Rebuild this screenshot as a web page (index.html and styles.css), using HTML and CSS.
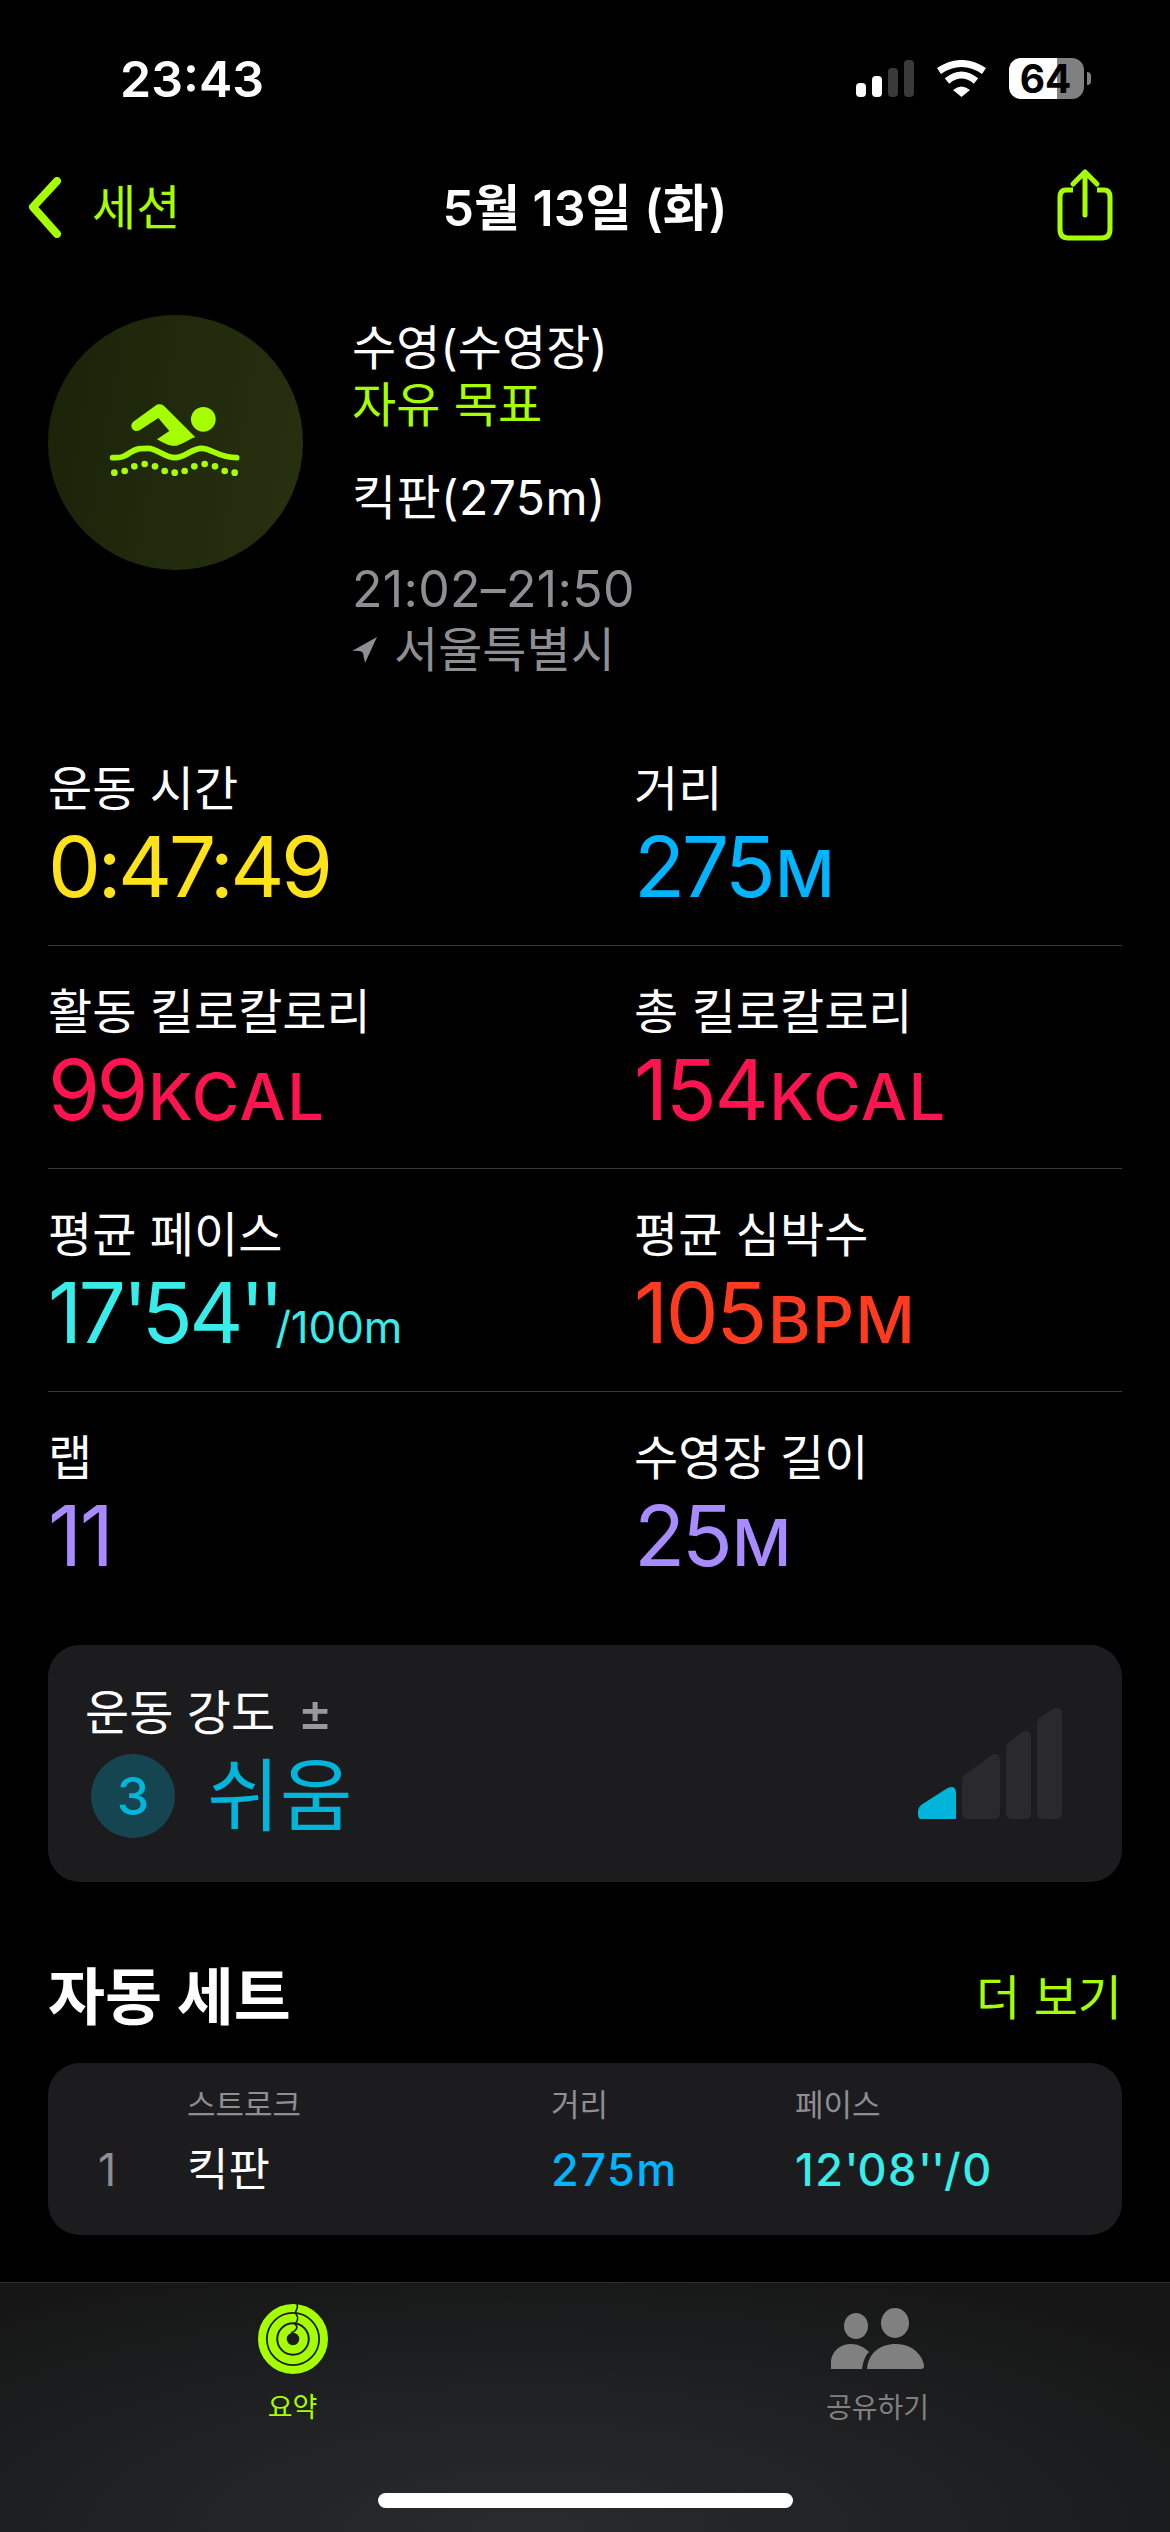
FILE: index.html
```html
<!DOCTYPE html>
<html lang="ko">
  <head>
    <meta charset="UTF-8" />
    <title>5월 13일 (화)</title>
    <link rel="stylesheet" href="styles.css">
  </head>
  <body>
    <div id="page">
      <div class="status-bar">
        <span class="clock">23:43</span>
        <div class="status-icons">
          <svg class="signal" width="58" height="37" viewBox="0 0 58 37">
            <rect x="0" y="23" width="10" height="14" rx="4" fill="#fff" />
            <rect x="16" y="16" width="10" height="21" rx="4" fill="#fff" />
            <rect x="32" y="8" width="10" height="29" rx="4" fill="#3a3a3a" />
            <rect x="48" y="0" width="10" height="37" rx="4" fill="#3a3a3a" />
          </svg>
          <svg class="wifi" width="51" height="37" viewBox="0 0 51 37">
            <path d="M3 11 Q25.5 -4 48 11" fill="none" stroke="#fff" stroke-width="7" />
            <path d="M11 21 Q25.5 9 40 21" fill="none" stroke="#fff" stroke-width="7" />
            <path d="M17 30 Q25.5 23 34 30 L25.5 37 Z" fill="#fff" />
          </svg>
          <div class="battery">
            <div class="battery-body"><span class="battery-num">64</span></div>
            <div class="battery-tip"></div>
          </div>
        </div>
      </div>

      <div class="nav-bar">
        <div class="nav-back">
          <svg width="36" height="61" viewBox="0 0 36 61">
            <path d="M30 4 L6 30 L30 57" fill="none" stroke="#a6ff00" stroke-width="8" stroke-linecap="round" stroke-linejoin="round" />
          </svg>
          <span class="nav-back-text">세션</span>
        </div>
        <div class="nav-title">5월 13일 (화)</div>
        <svg class="nav-share" width="60" height="74" viewBox="0 0 60 74">
          <path d="M20 23 H13 Q7 23 7 30 V62 Q7 71 15 71 H49 Q57 71 57 62 V30 Q57 23 51 23 H44" fill="none" stroke="#a6ff00" stroke-width="5" />
          <path d="M32 48 V6 M20 17 L32 5 L44 17" fill="none" stroke="#a6ff00" stroke-width="5" stroke-linecap="round" stroke-linejoin="round" />
        </svg>
      </div>

      <div class="hero">
        <div class="hero-circle">
          <svg width="180" height="110" viewBox="0 0 540 330">
            <circle cx="340" cy="118" r="37" fill="#a6ff00" />
            <path d="M207 73 C215 72 220 76 226 82 L316 172 C300 175 285 190 260 197 C240 200 222 190 201 178 L238 153 L205 114 L150 150 C138 158 125 150 124 138 C124 130 128 126 134 122 L195 78 C199 75 203 73 207 73 Z" fill="#a6ff00" />
            <path d="M68 233 C100 233 105 228 120 218 C140 205 150 205 175 205 C200 205 225 233 255 233 C285 233 305 205 335 205 C365 205 385 233 440 233" fill="none" stroke="#a6ff00" stroke-width="17" stroke-linecap="round" />
            <g fill="#a6ff00">
              <circle cx="73" cy="278" r="10" /><circle cx="104" cy="273" r="10" /><circle cx="133" cy="259" r="10" />
              <circle cx="164" cy="252" r="10" /><circle cx="195" cy="259" r="10" /><circle cx="224" cy="273" r="10" />
              <circle cx="254" cy="278" r="10" /><circle cx="284" cy="273" r="10" /><circle cx="313" cy="259" r="10" />
              <circle cx="344" cy="252" r="10" /><circle cx="375" cy="259" r="10" /><circle cx="404" cy="273" r="10" />
              <circle cx="434" cy="278" r="10" />
            </g>
          </svg>
        </div>
        <div class="hero-text">
          <div>수영(수영장)</div>
          <div class="green hero-goal">자유 목표</div>
          <div class="hero-gap-a">킥판(275m)</div>
          <div class="hero-gap-b hero-time gray">21:02–21:50</div>
          <div class="hero-place gray">
            <svg width="25" height="26" viewBox="0 0 25 26">
              <path d="M25 0 L0 14 Q9 13 11 16 L13 26 Z" fill="#8e8e93" />
            </svg>
            <span>서울특별시</span>
          </div>
        </div>
      </div>

      <div class="stats">
        <div class="stat-row">
          <div class="stat">
            <div class="stat-label">운동 시간</div>
            <div class="stat-value yellow">0:47:49</div>
          </div>
          <div class="stat">
            <div class="stat-label">거리</div>
            <div class="stat-value blue">275<span class="unit">M</span></div>
          </div>
        </div>
        <div class="stat-row">
          <div class="stat">
            <div class="stat-label">활동 킬로칼로리</div>
            <div class="stat-value pink">99<span class="unit">KCAL</span></div>
          </div>
          <div class="stat">
            <div class="stat-label">총 킬로칼로리</div>
            <div class="stat-value loose pink">154<span class="unit">KCAL</span></div>
          </div>
        </div>
        <div class="stat-row">
          <div class="stat">
            <div class="stat-label">평균 페이스</div>
            <div class="stat-value cyan">17<span class="ticks">'</span>54<span class="ticks">''</span><span class="unit-small">/100m</span></div>
          </div>
          <div class="stat">
            <div class="stat-label">평균 심박수</div>
            <div class="stat-value loose red">105<span class="unit">BPM</span></div>
          </div>
        </div>
        <div class="stat-row">
          <div class="stat">
            <div class="stat-label">랩</div>
            <div class="stat-value loose purple">11</div>
          </div>
          <div class="stat">
            <div class="stat-label">수영장 길이</div>
            <div class="stat-value purple">25<span class="unit">M</span></div>
          </div>
        </div>
      </div>

      <div class="effort-card">
        <div class="effort-left">
          <div class="effort-label">운동 강도 <span class="effort-plus">±</span></div>
          <div class="effort-row">
            <div class="effort-badge">3</div>
            <div class="effort-word">쉬움</div>
          </div>
        </div>
        <svg class="effort-bars" width="144" height="111" viewBox="0 0 144 111">
          <path d="M3 111 Q0 111 0 106 V103 Q0 100 3 97 L28 81 Q31 79 34 79 Q38 79 38 85 V111 Z" fill="#00b5d9" />
          <path d="M50 111 Q44 111 44 105 V72 Q44 69 46 67 L71 49 Q74 46 77 46 Q82 46 82 52 V105 Q82 111 76 111 Z" fill="#2a2a2c" />
          <path d="M94 111 Q88 111 88 105 V40 Q88 37 90 35 L104 24 Q106 23 108 23 Q113 23 113 29 V105 Q113 111 107 111 Z" fill="#2a2a2c" />
          <path d="M125 111 Q119 111 119 105 V15 Q119 12 121 10 L135 1 Q137 0 139 0 Q144 0 144 6 V105 Q144 111 138 111 Z" fill="#2a2a2c" />
        </svg>
      </div>

      <div class="section-head">
        <div class="section-title">자동 세트</div>
        <div class="section-more">더 보기</div>
      </div>

      <div class="set-card">
        <div></div>
        <div class="set-head">스트로크</div>
        <div class="set-head">거리</div>
        <div class="set-head">페이스</div>
        <div class="set-cell gray">1</div>
        <div class="set-cell">킥판</div>
        <div class="set-cell set-num blue">275m</div>
        <div class="set-cell set-num cyan">12<span class="set-ticks">'</span>08<span class="set-ticks">''</span>/0</div>
      </div>

      <div class="tab-bar">
        <div class="tabs">
          <div class="tab green">
            <svg width="70" height="70" viewBox="0 0 70 70">
              <circle cx="35" cy="35" r="31" fill="none" stroke="#a6ff00" stroke-width="8" />
              <circle cx="35" cy="35" r="21" fill="none" stroke="#a6ff00" stroke-width="8.5" />
              <circle cx="35" cy="35" r="10.5" fill="none" stroke="#a6ff00" stroke-width="8.5" />
              <path d="M39 0 C41 5 36 7 38 10 C41 14 39 18 37 20 C41 23 38 27 33 29" fill="none" stroke="#161616" stroke-width="1.6" />
            </svg>
            <span class="tab-label">요약</span>
          </div>
          <div class="tab tab-off">
            <svg class="tab-people" width="93" height="61" viewBox="0 0 93 61">
              <ellipse cx="25" cy="18" rx="12" ry="13" fill="#808080" />
              <ellipse cx="64" cy="15" rx="14" ry="15" fill="#808080" />
              <path d="M0 61 V52 C2 42 10 36 20 36 C27 36 33 39 38 44 C34 48 32 54 31 61 Z" fill="#808080" />
              <path d="M36 61 C37 46 48 36 65 36 C82 36 92 48 93 58 Q93 61 90 61 Z" fill="#808080" />
            </svg>
            <span class="tab-label tab-label-wide">공유하기</span>
          </div>
        </div>
        <div class="home-indicator"></div>
      </div>
    </div>
  </body>
</html>
```

FILE: styles.css
```css
* {
  box-sizing: border-box;
}

body {
  margin: 0;
  background: #000;
  color: #fff;
  font-family: Inter, "Noto Sans CJK KR", sans-serif;
}

#page {
  width: 1170px;
  height: 2532px;
  display: flex;
  flex-direction: column;
  overflow: hidden;
}

.green {
  color: #a6ff00;
}

.gray {
  color: #8e8e93;
}

.yellow {
  color: #ffe21a;
}

.blue {
  color: #00b4ff;
}

.pink {
  color: #ff1450;
}

.cyan {
  color: #38ecea;
}

.red {
  color: #ff3b1f;
}

.purple {
  color: #a78bff;
}

/* status bar */
.status-bar {
  height: 156px;
  flex: none;
  display: flex;
  justify-content: space-between;
  align-items: center;
  padding: 0 79px 0 120px;
}

.clock {
  font-size: 50px;
  font-weight: 600;
  margin-top: 2px;
}

.status-icons {
  display: flex;
  align-items: center;
  gap: 22px;
}

.battery {
  display: flex;
  align-items: center;
  gap: 3px;
}

.battery-body {
  width: 75px;
  height: 41px;
  border-radius: 12px;
  background: linear-gradient(90deg, #fff 64%, #808080 64%);
  color: #000;
  display: flex;
  align-items: center;
  justify-content: center;
}

.battery-num {
  font-size: 39px;
  font-weight: 700;
  margin-left: -2px;
}

.battery-tip {
  width: 4px;
  height: 13px;
  border-radius: 0 4px 4px 0;
  background: #808080;
}

/* nav */
.nav-bar {
  height: 102px;
  flex: none;
  display: grid;
  grid-template-columns: 1fr auto 1fr;
  align-items: center;
  padding: 0 57px;
}

.nav-back {
  display: flex;
  align-items: center;
  gap: 29px;
  margin-left: -30px;
  color: #a6ff00;
  font-size: 48px;
}

.nav-back-text {
  margin-bottom: 6px;
}

.nav-title {
  font-size: 50px;
  font-weight: 600;
  margin-bottom: 6px;
}

.nav-share {
  justify-self: end;
  margin-bottom: 6px;
}

/* hero */
.hero {
  height: 465px;
  flex: none;
  display: flex;
  gap: 49px;
  padding: 57px 48px 0;
}

.hero-circle {
  width: 255px;
  height: 255px;
  flex: none;
  border-radius: 50%;
  background: linear-gradient(100deg, #1a2308, #273110);
  display: flex;
  align-items: center;
  justify-content: center;
  padding: 0 0 15px 9px;
}

.hero-text {
  font-size: 48px;
  line-height: 60px;
  margin-top: 3px;
}

.hero-goal {
  margin-top: -3px;
}

.hero-gap-a {
  margin-top: 33px;
  letter-spacing: 0.4px;
}

.hero-gap-b {
  margin-top: 31px;
}

.hero-time {
  font-size: 50px;
  letter-spacing: 0.3px;
}

.hero-place {
  display: flex;
  align-items: center;
  gap: 17px;
  margin-top: 1px;
}

/* stats */
.stats {
  flex: none;
  padding: 0 48px;
}

.stat-row {
  height: 223px;
  display: grid;
  grid-template-columns: 586px 1fr;
  border-bottom: 1px solid #38383a;
}

.stat-row:last-child {
  border-bottom: 0;
}

.stat {
  padding-top: 36px;
}

.stat-label {
  font-size: 48px;
  line-height: 60px;
}

.stat-value {
  font-size: 84px;
  line-height: 90px;
  margin-top: 3px;
  letter-spacing: -3.6px;
  white-space: nowrap;
}

.stat-value.loose {
  letter-spacing: -2.4px;
}

.ticks {
  letter-spacing: -6px;
}

.unit {
  font-size: 65px;
  font-weight: 500;
  letter-spacing: 1.5px;
  margin-left: 3px;
}

.unit-small {
  font-size: 44px;
  letter-spacing: -0.2px;
  margin-left: -3px;
}

/* effort card */
.effort-card {
  height: 237px;
  flex: none;
  margin: 30px 48px 0;
  padding: 37px 60px 0 37px;
  border-radius: 32px;
  background: #1c1c1e;
  display: flex;
  justify-content: space-between;
  align-items: flex-start;
}

.effort-label {
  font-size: 48px;
  line-height: 60px;
}

.effort-plus {
  color: #98989d;
  font-size: 52px;
  font-weight: 500;
  margin-left: 9px;
}

.effort-row {
  display: flex;
  align-items: center;
  gap: 32px;
  margin: 11px 0 0 6px;
  color: #00b5d9;
}

.effort-badge {
  width: 84px;
  height: 84px;
  border-radius: 50%;
  background: #164552;
  display: flex;
  align-items: center;
  justify-content: center;
  font-size: 52px;
  font-weight: 500;
}

.effort-word {
  font-size: 79px;
  line-height: 84px;
}

.effort-bars {
  margin-top: 26px;
}

/* section */
.section-head {
  height: 72px;
  flex: none;
  margin: 76px 48px 33px;
  display: flex;
  justify-content: space-between;
  align-items: center;
}

.section-title {
  font-size: 62px;
  font-weight: 700;
  margin-bottom: 3px;
}

.section-more {
  color: #a6ff00;
  font-size: 48px;
}

.set-card {
  height: 172px;
  flex: none;
  margin: 0 48px;
  padding: 22px 0 0 50px;
  border-radius: 32px;
  background: #1c1c1e;
  display: grid;
  grid-template-columns: 89px 364px 244px 1fr;
  grid-template-rows: 40px 60px;
  row-gap: 15px;
}

.set-head {
  color: #8e8e93;
  font-size: 31px;
  line-height: 40px;
}

.set-cell {
  font-size: 45px;
  line-height: 60px;
}

.set-num {
  font-weight: 500;
  letter-spacing: 1.5px;
}

.set-ticks {
  letter-spacing: -1px;
}

/* tab bar */
.tab-bar {
  flex: none;
  height: 250px;
  margin-top: auto;
  border-top: 1px solid #2e2e30;
  background: radial-gradient(ellipse 900px 300px at 45% 100%, #282c2e, #161616 95%);
  display: flex;
  flex-direction: column;
}

.tabs {
  display: grid;
  grid-template-columns: 1fr 1fr;
  padding-top: 21px;
}

.tab {
  display: flex;
  flex-direction: column;
  align-items: center;
}

.tab-off {
  color: #808080;
}

.tab-people {
  margin: 4px 0 5px;
}

.tab-label {
  margin-top: 16px;
  font-size: 27px;
  line-height: 36px;
}

.tab-label-wide {
  font-size: 28px;
}

.home-indicator {
  width: 415px;
  height: 15px;
  margin: auto auto 24px;
  border-radius: 8px;
  background: #fff;
}
```
